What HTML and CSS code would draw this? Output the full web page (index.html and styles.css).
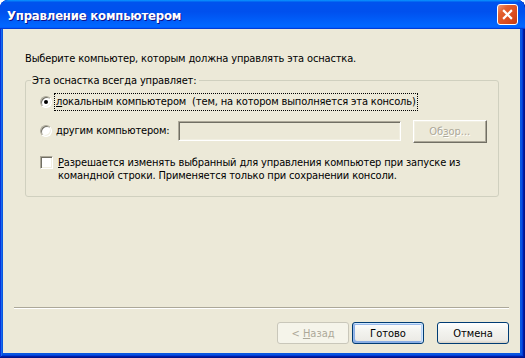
FILE: index.html
```html
<!DOCTYPE html>
<html lang="ru">
<head>
    <meta charset="UTF-8">
    <title>Управление компьютером</title>
    <link rel="stylesheet" href="styles.css">
</head>
<body>

    <div class="window">
        <div class="titlebar">
            <span class="title">Управление компьютером</span>
            <button class="close" type="button" aria-label="Закрыть">
                <svg viewBox="0 0 21 21" width="21" height="21">
                    <path d="M6.5 6.5 L14.5 14.5 M14.5 6.5 L6.5 14.5" stroke="#fff" stroke-width="2.4" stroke-linecap="square" fill="none"/>
                </svg>
            </button>
        </div>

        <div class="client">
            <p class="intro">Выберите компьютер, которым должна управлять эта оснастка.</p>

            <fieldset class="group">
                <legend>Эта оснастка всегда управляет:</legend>
                <div class="group-body">
                    <label class="option option-local">
                        <input type="radio" name="target" class="radio" checked>
                        <span class="caption focused"><u>л</u>окальным компьютером&nbsp; (тем, на котором выполняется эта консоль)</span>
                    </label>

                    <div class="option option-remote">
                        <label class="option-label">
                            <input type="radio" name="target" class="radio">
                            <span class="caption">другим компьютером:</span>
                        </label>
                        <input type="text" class="field" disabled>
                        <button type="button" class="classic-btn" disabled>Об<u>з</u>ор...</button>
                    </div>

                    <label class="option option-check">
                        <input type="checkbox" class="check">
                        <span class="check-text"><u>Р</u>азрешается изменять выбранный для управления компьютер при запуске из<br>командной строки. Применяется только при сохранении консоли.</span>
                    </label>
                </div>
            </fieldset>

            <div class="rule"></div>

            <div class="actions">
                <button type="button" class="btn" disabled>&lt; <u>Н</u>азад</button>
                <button type="button" class="btn btn-default">Готово</button>
                <button type="button" class="btn btn-cancel">Отмена</button>
            </div>
        </div>
    </div>

</body>
</html>
```

FILE: styles.css
```css
body {
    margin: 0;
    background: #fff;
}
.window {
    width: 525px;
    height: 358px;
    display: flex;
    flex-direction: column;
    background: #0856e0;
    border-radius: 8px 8px 0 0;
    box-shadow: inset -1px -1px #00138c, inset 1px 1px #0831d9, inset -2px -2px #001ea0, inset 2px 2px #166aee, inset -3px -3px #003bda;
    overflow: hidden;
}
.titlebar {
    height: 29px;
    flex: none;
    display: flex;
    align-items: center;
    padding: 0 7px;
    border-radius: 8px 8px 0 0;
    background: linear-gradient(180deg, #0997ff, #0053ee 8%, #0050ee 40%, #0066ff 88%, #0066ff 93%, #005bff 95%, #003dd7 96%, #003dd7);
}
.title {
    font-family: "DejaVu Sans Condensed", "DejaVu Sans", sans-serif;
    font-weight: 700;
    font-size: 13px;
    color: #fff;
    text-shadow: 1px 1px #0f1089;
    padding-top: 2px;
    letter-spacing: -0.2px;
}
.close {
    margin-left: auto;
    width: 21px;
    height: 21px;
    padding: 0;
    border: 1px solid #fff;
    border-radius: 3px;
    background: linear-gradient(135deg, #f29a76 0%, #e3602f 28%, #d94a1e 70%, #c23c12 100%);
    display: flex;
    align-items: center;
    justify-content: center;
}
.close svg {
    display: block;
    width: 19px;
    height: 19px;
}
.client {
    flex: 1;
    margin: 0 5px 5px 3px;
    padding: 0 11px;
    background: #ece9d8;
    display: flex;
    flex-direction: column;
    font-family: "DejaVu Sans Condensed", "DejaVu Sans", sans-serif;
    font-size: 11px;
    letter-spacing: -0.15px;
    color: #000;
}
.intro {
    margin: 23px 0 0 11px;
    line-height: 13px;
}
.group {
    margin: 9px 10px 0 11px;
    padding: 0;
    border: 1px solid #d0d0bf;
    border-radius: 3px;
    min-width: 0;
}
.group legend {
    margin-left: 5px;
    padding: 0 3px 0 1px;
    line-height: 13px;
}
.group-body {
    padding: 6px 11px 14px 14px;
}
.option {
    display: flex;
    align-items: center;
}
.option-label {
    display: flex;
    align-items: center;
}
.option-local {
    height: 18px;
}
.option-remote {
    margin-top: 8px;
    height: 24px;
}
.option-remote .caption {
    width: 120px;
}
.radio {
    appearance: none;
    -webkit-appearance: none;
    flex: none;
    width: 12px;
    height: 12px;
    margin: 0 2px 0 0;
    border: 1px solid;
    border-color: #aca899 #fff #fff #aca899;
    border-radius: 50%;
    background: #fff;
    box-shadow: inset 1px 1px #716f64, inset -1px -1px #f1efe2;
    position: relative;
}
.radio:checked::after {
    content: "";
    position: absolute;
    left: 3px;
    top: 3px;
    width: 4px;
    height: 4px;
    border-radius: 50%;
    background: #000;
}
.caption {
    border: 1px dotted transparent;
    padding: 0 1px;
    line-height: 16px;
    white-space: nowrap;
}
.caption.focused {
    border-color: #000;
}
.field {
    appearance: none;
    -webkit-appearance: none;
    box-sizing: border-box;
    width: 224px;
    height: 20px;
    margin: 0;
    border: 1px solid;
    border-color: #aca899 #fff #fff #aca899;
    box-shadow: inset 1px 1px #716f64, inset -1px -1px #f1efe2;
    background: #ece9d8;
}
.classic-btn {
    box-sizing: border-box;
    width: 75px;
    height: 23px;
    margin-left: 12px;
    padding: 0;
    border: 1px solid;
    border-color: #fff #716f64 #716f64 #fff;
    box-shadow: inset -1px -1px #aca899, inset 1px 1px #f1efe2;
    background: #ece9d8;
    font: inherit;
    color: #aca899;
    text-shadow: 1px 1px #fff;
}
.option-check {
    margin-top: 13px;
    align-items: flex-start;
}
.check {
    appearance: none;
    -webkit-appearance: none;
    flex: none;
    box-sizing: border-box;
    width: 13px;
    height: 13px;
    margin: 0 5px 0 0;
    border: 1px solid;
    border-color: #aca899 #fff #fff #aca899;
    box-shadow: inset 1px 1px #716f64, inset -1px -1px #f1efe2;
    background: #fff;
}
.check-text {
    line-height: 13px;
    white-space: nowrap;
}
.rule {
    margin-top: auto;
    border-top: 1px solid #aca899;
    border-bottom: 1px solid #fff;
}
.actions {
    display: flex;
    justify-content: flex-end;
    margin: 13px 0 9px;
}
.btn {
    box-sizing: border-box;
    width: 72px;
    height: 22px;
    padding: 0;
    border: 1px solid #003c74;
    border-radius: 3px;
    background: linear-gradient(180deg, #fff 0%, #f3f3ef 40%, #ecebe6 86%, #d6d0c5 100%);
    font: inherit;
    color: #000;
}
.btn:disabled {
    border-color: #c9c7ba;
    background: #f5f4ea;
    color: #aca899;
}
.btn-default {
    margin-left: 3px;
    box-shadow: inset -1px 1px #cee7ff, inset 1px 2px #98b8ea, inset -2px 0 #bcd4f6, inset 1px -1px #89ade4, inset 2px -2px #89ade4;
}
.btn-cancel {
    margin-left: 13px;
}
```
